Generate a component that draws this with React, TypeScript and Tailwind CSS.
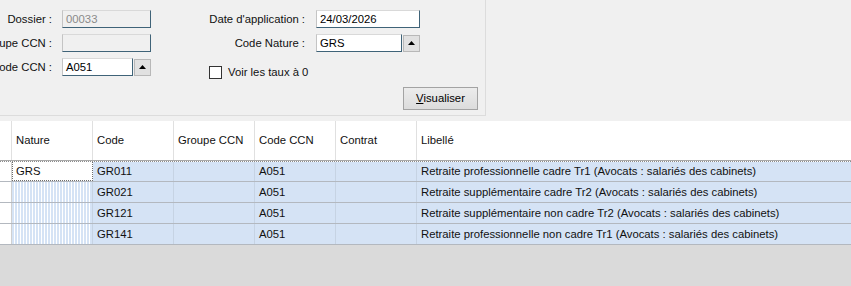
import React from "react";

const rows = [
  { nature: "GRS", code: "GR011", ccn: "A051", libelle: "Retraite professionnelle cadre Tr1 (Avocats : salariés des cabinets)" },
  { nature: "", code: "GR021", ccn: "A051", libelle: "Retraite supplémentaire cadre Tr2 (Avocats : salariés des cabinets)" },
  { nature: "", code: "GR121", ccn: "A051", libelle: "Retraite supplémentaire non cadre Tr2 (Avocats : salariés des cabinets)" },
  { nature: "", code: "GR141", ccn: "A051", libelle: "Retraite professionnelle non cadre Tr1 (Avocats : salariés des cabinets)" },
];

const headers = ["Nature", "Code", "Groupe CCN", "Code CCN", "Contrat"];

function Label({ children, width }: { children: React.ReactNode; width: string }) {
  return (
    <div className={`${width} flex justify-end items-center whitespace-nowrap`}>
      {children}
    </div>
  );
}

function Field({
  value,
  width,
  disabled,
}: {
  value: string;
  width: string;
  disabled?: boolean;
}) {
  return (
    <div
      className={`${width} h-[18px] flex items-center px-[3px] border border-t-[#d9d9d9] border-l-[#c4c4c4] border-b-[#3f6378] border-r-[#3f6378] ${
        disabled ? "bg-[#f0f0f0] text-[#8a8a8a]" : "bg-white text-black"
      }`}
    >
      {value}
    </div>
  );
}

// small drop button with the up arrow
function ArrowButton() {
  return (
    <div className="w-[17px] h-[17px] ml-[1px] flex items-center justify-center bg-[#e1e1e1] border border-[#b8b8b8]">
      <svg width="7" height="4" viewBox="0 0 7 4">
        <polygon points="3.5,0 7,4 0,4" fill="#000" />
      </svg>
    </div>
  );
}

export default function App() {
  return (
    <div
      className="w-[851px] h-[286px] overflow-hidden bg-[#f0f0f0] flex flex-col text-[11.3px] text-[#111111]"
      style={{ fontFamily: '"Liberation Sans", Arial, sans-serif' }}
    >
      {/* Filter panel */}
      <div className="h-[121px] shrink-0">
        <div className="w-[486px] h-[116px] border-r border-b border-[#dcdcdc] pt-[10px] flex flex-col gap-[6px]">
          <div className="flex items-center h-[18px]">
            <Label width="w-[52px]">Dossier :</Label>
            <div className="ml-[10px]">
              <Field value="00033" width="w-[89px]" disabled />
            </div>
            <Label width="w-[154px]">Date d'application :</Label>
            <div className="ml-[11px]">
              <Field value="24/03/2026" width="w-[104px]" />
            </div>
          </div>
          <div className="flex items-center h-[18px]">
            <Label width="w-[52px]">Groupe CCN :</Label>
            <div className="ml-[10px]">
              <Field value="" width="w-[89px]" disabled />
            </div>
            <Label width="w-[154px]">Code Nature :</Label>
            <div className="ml-[11px] flex items-center">
              <Field value="GRS" width="w-[86px]" />
              <ArrowButton />
            </div>
          </div>
          <div className="flex items-start h-[18px]">
            <Label width="w-[52px] h-[18px]">Code CCN :</Label>
            <div className="ml-[10px] flex items-center">
              <Field value="A051" width="w-[71px]" />
              <ArrowButton />
            </div>
            <label className="ml-[58px] mt-[6px] flex items-center gap-[6px] whitespace-nowrap">
              <span className="w-[13px] h-[13px] bg-white border border-[#333333]" />
              <span>Voir les taux à 0</span>
            </label>
          </div>
          <div className="flex justify-end pr-[7px] mt-[5px]">
            <button className="w-[75px] h-[23px] border border-[#a3a3a3] bg-[linear-gradient(#ececec,#dcdcdc)] text-black">
              <span className="underline">V</span>isualiser
            </button>
          </div>
        </div>
      </div>

      {/* Grid */}
      <div className="bg-white">
        <div className="flex h-[40px] border-b border-[#a9a9a9]">
          <div className="w-[12px] border-r border-[#e0e0e0]" />
          {headers.map(h => (
            <div key={h} className="w-[81px] border-r border-[#e0e0e0] flex items-center pl-[4px] whitespace-nowrap">
              {h}
            </div>
          ))}
          <div className="flex-1 flex items-center pl-[4px]">Libellé</div>
        </div>
        {rows.map((r, i) => (
          <div
            key={r.code}
            className={`flex h-[21px] border-b border-[#b3b8bf] ${
              i === 0 ? "border-t border-t-[#8c8c8c]" : ""
            }`}
            style={i === 0 ? { borderTopStyle: "dotted" } : undefined}
          >
            <div className="w-[12px] bg-white border-r border-[#d0d0d0]" />
            {i === 0 ? (
              <div className="w-[81px] bg-white border border-dotted border-[#6e6e6e] border-t-0 flex items-center pl-[3px]">
                {r.nature}
              </div>
            ) : (
              <div className="w-[81px] bg-[repeating-linear-gradient(90deg,#d5e3f5_0px,#d5e3f5_2px,#ffffff_2px,#ffffff_3px)] border-r border-[#c6d3e3]" />
            )}
            <div className="w-[81px] bg-[#d5e3f5] border-r border-[#c6d3e3] flex items-center pl-[4px]">{r.code}</div>
            <div className="w-[81px] bg-[#d5e3f5] border-r border-[#c6d3e3]" />
            <div className="w-[81px] bg-[#d5e3f5] border-r border-[#c6d3e3] flex items-center pl-[4px]">{r.ccn}</div>
            <div className="w-[81px] bg-[#d5e3f5] border-r border-[#c6d3e3]" />
            <div className="flex-1 bg-[#d5e3f5] flex items-center pl-[4px] whitespace-nowrap">{r.libelle}</div>
          </div>
        ))}
      </div>
      <div className="flex-1 bg-[#dadada]" />
    </div>
  );
}
